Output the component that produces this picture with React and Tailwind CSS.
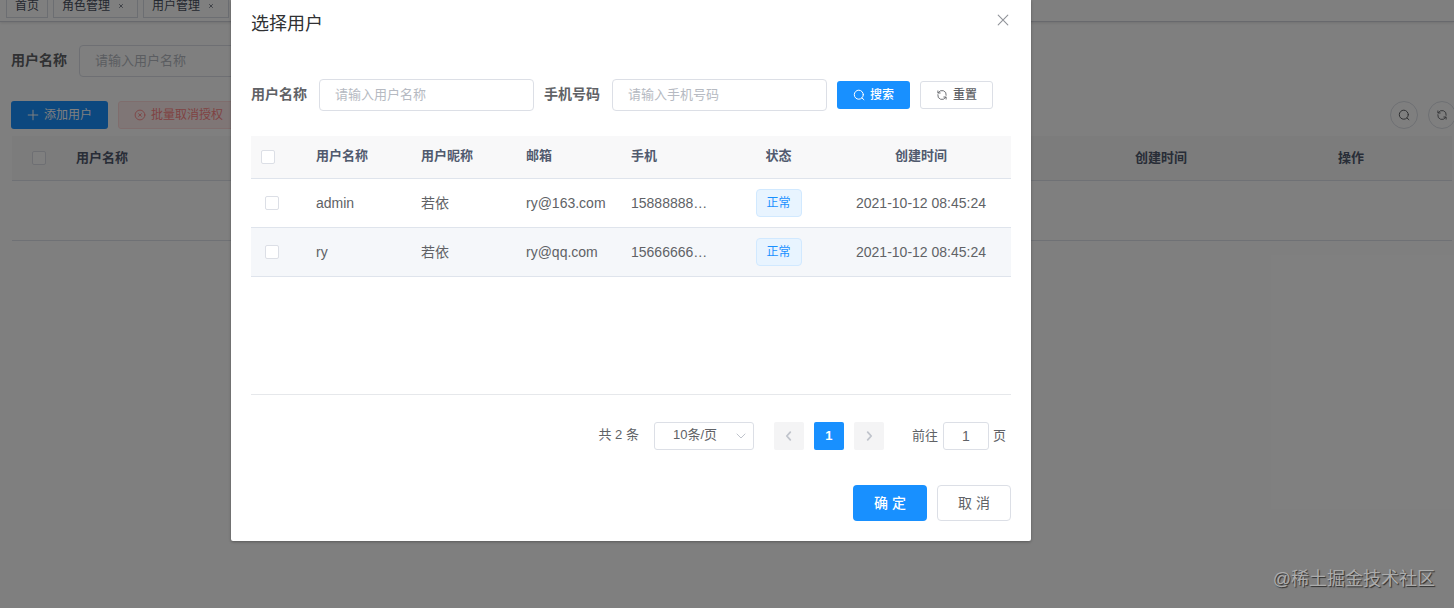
import React from "react";

const SearchIcon = ({ size = 12 }) => (
  <svg width={size} height={size} viewBox="0 0 12 12" fill="none" stroke="currentColor" strokeWidth="1" strokeLinecap="round">
    <circle cx="5.8" cy="5.7" r="4.5" />
    <path d="M9 9 L10.9 10.7" />
  </svg>
);

const RefreshIcon = ({ size = 12 }) => (
  <svg width={size} height={size} viewBox="0 0 12 12" fill="none" stroke="currentColor" strokeWidth="0.9" strokeLinecap="round" strokeLinejoin="round">
    <path d="M2.3 3.8 A4.2 4.2 0 0 1 10.2 6.3" />
    <path d="M9.7 8.2 A4.2 4.2 0 0 1 1.8 5.7" />
    <path d="M1.9 1.9 V4 H4.2" />
    <path d="M10.1 10.1 V8 H7.8" />
  </svg>
);

const CloseIcon = () => (
  <svg width="12" height="12" viewBox="0 0 12 12" fill="none" stroke="currentColor" strokeWidth="1.1" strokeLinecap="round">
    <path d="M1.2 1.2 L10.8 10.8 M10.8 1.2 L1.2 10.8" />
  </svg>
);

const PlusIcon = () => (
  <svg width="12" height="12" viewBox="0 0 12 12" fill="none" stroke="currentColor" strokeWidth="1">
    <path d="M6 0.8 V11.2 M0.8 6 H11.2" />
  </svg>
);

const CircleCloseIcon = () => (
  <svg width="12" height="12" viewBox="0 0 12 12" fill="none" stroke="currentColor" strokeWidth="0.9" strokeLinecap="round">
    <circle cx="6" cy="6" r="4.9" />
    <path d="M4.6 4.7 L7.4 7.3 M7.4 4.7 L4.6 7.3" />
  </svg>
);

const Chevron = ({ d, size = 12, width = 1.8 }) => (
  <svg width={size} height={size} viewBox="0 0 12 12" fill="none" stroke="currentColor" strokeWidth={width} strokeLinecap="round" strokeLinejoin="round">
    <path d={d} />
  </svg>
);

const Checkbox = () => <span className="block size-[14px] shrink-0 rounded-[2px] border border-[#dcdfe6] bg-white" />;

const Tab = ({ label, className, closable }) => (
  <div className={`flex h-[26px] shrink-0 items-center border border-[#d8dce5] pl-2 pt-px text-[12px] text-[#495060] ${className}`}>
    {label}
    {closable && (
      <svg className="ml-[7px] mt-px" width="8" height="8" viewBox="0 0 8 8" stroke="currentColor" strokeWidth="0.7">
        <path d="M2.2 2.2 L5.8 5.8 M5.8 2.2 L2.2 5.8" />
      </svg>
    )}
  </div>
);

const Field = ({ placeholder }) => (
  <div className="flex h-8 w-[215px] shrink-0 items-center rounded-[4px] border border-[#dcdfe6] bg-white pb-px pl-[15px] text-[13px] text-[#b6bac2]">
    {placeholder}
  </div>
);

const Background = () => (
  <div className="flex h-full w-full flex-col bg-white">
    <div className="flex h-[22px] shrink-0 items-end gap-[5px] border-b border-[#d0d3da] pb-[3px] pl-[6px] shadow-[0_1px_3px_0_rgba(0,0,0,0.12)]">
      <Tab label="首页" className="w-[42px]" />
      <Tab label="角色管理" className="w-[85px]" closable />
      <Tab label="用户管理" className="w-[86px]" closable />
    </div>
    <div className="mt-[23px] flex h-8 items-center pl-[11px]">
      <span className="mr-3 pb-px text-[14px] font-bold text-[#606266]">用户名称</span>
      <Field placeholder="请输入用户名称" />
    </div>
    <div className="mt-6 flex h-7 shrink-0 items-center pl-[11px] text-[12px]">
      <div className="flex h-7 w-[97px] items-center rounded-[3px] bg-[#1890ff] pl-4 text-white">
        <PlusIcon />
        <span className="ml-[5px] pb-px">添加用户</span>
      </div>
      <div className="ml-[10px] flex h-7 w-[122px] items-center rounded-[3px] border border-[#ffdbdb] bg-[#ffeded] pl-[15px] text-[#ff8686]">
        <CircleCloseIcon />
        <span className="ml-[5px] pb-px">批量取消授权</span>
      </div>
      <div className="ml-auto flex gap-[10px] text-[#606266]">
        <span className="flex size-7 items-center justify-center rounded-full border border-[#dcdfe6]"><SearchIcon /></span>
        <span className="-mr-[2px] flex size-7 items-center justify-center rounded-full border border-[#dcdfe6]"><RefreshIcon /></span>
      </div>
    </div>
    <div className="ml-[12px] mr-[2px] mt-[7px] flex h-[45px] shrink-0 items-center border-b border-[#dfe3ea] bg-[#f8f8f9] text-[13px] font-bold text-[#515a6e]">
      <div className="w-[64px] pl-5"><Checkbox /></div>
      <div className="w-[959px]">用户名称</div>
      <div className="w-[228px] pl-[100px] text-center whitespace-nowrap"><span className="block w-[52px]">创建时间</span></div>
      <div className="flex-1 pl-[75px]">操作</div>
    </div>
    <div className="ml-[12px] mr-[2px] h-[60px] border-b border-[#dfe3ea]" />
  </div>
);

const columns = "grid grid-cols-[55px_105px_105px_105px_105px_105px_180px] items-center";

const rows = [
  { name: "admin", nick: "若依", mail: "ry@163.com", phone: "15888888…", time: "2021-10-12 08:45:24", tint: "bg-white" },
  { name: "ry", nick: "若依", mail: "ry@qq.com", phone: "15666666…", time: "2021-10-12 08:45:24", tint: "bg-[#f5f7fa]" },
];

const UserTable = () => (
  <div className="mt-[25px] h-[259px] border-b border-[#e6e8eb]">
    <div className={`${columns} h-[43px] border-b border-[#dfe4ec] bg-[#f8f8f9] text-[13px] font-bold text-[#515a6e]`}>
      <div className="pl-[10px]"><Checkbox /></div>
      <div className="pb-[2px] pl-[10px]">用户名称</div>
      <div className="pb-[2px] pl-[10px]">用户昵称</div>
      <div className="pb-[2px] pl-[10px]">邮箱</div>
      <div className="pb-[2px] pl-[10px]">手机</div>
      <div className="pb-[2px] text-center">状态</div>
      <div className="pb-[2px] text-center">创建时间</div>
    </div>
    {rows.map((r) => (
      <div key={r.name} className={`${columns} h-[49px] border-b border-[#dfe4ec] text-[14px] text-[#606266] ${r.tint}`}>
        <div className="pl-[14px]"><Checkbox /></div>
        <div className="pl-[10px]">{r.name}</div>
        <div className="pl-[10px]">{r.nick}</div>
        <div className="pl-[10px]">{r.mail}</div>
        <div className="pl-[10px]">{r.phone}</div>
        <div className="flex justify-center">
          <span className="flex h-7 w-[46px] items-center justify-center rounded-[4px] border border-[#d1e9ff] bg-[#e8f4ff] pb-px text-[12px] text-[#1890ff]">正常</span>
        </div>
        <div className="text-center">{r.time}</div>
      </div>
    ))}
  </div>
);

const Dialog = () => (
  <div className="absolute left-[231px] top-0 flex h-[541px] w-[800px] flex-col rounded-b-[2px] bg-white pl-5 pr-5 shadow-[0_1px_3px_rgba(0,0,0,0.3)]">
    <div className="flex h-[46px] items-center justify-between text-[18px] text-[#303133]">
      <span className="pt-[2px]">选择用户</span>
      <span className="mb-[6px] mr-[2px] text-[#909399]"><CloseIcon /></span>
    </div>
    <div className="mt-[33px] flex h-8 items-center text-[14px] font-bold text-[#606266]">
      <span className="w-[68px] pb-[2px]">用户名称</span>
      <div className="font-normal"><Field placeholder="请输入用户名称" /></div>
      <span className="ml-[10px] w-[68px] pb-[2px]">手机号码</span>
      <div className="font-normal"><Field placeholder="请输入手机号码" /></div>
      <div className="ml-[10px] flex h-7 w-[73px] items-center rounded-[3px] bg-[#1890ff] pl-4 text-[12px] font-medium text-white">
        <SearchIcon /><span className="ml-[5px]">搜索</span>
      </div>
      <div className="ml-[10px] flex h-7 w-[73px] items-center rounded-[3px] border border-[#dcdfe6] pl-[15px] text-[12px] font-medium">
        <RefreshIcon /><span className="ml-[5px]">重置</span>
      </div>
    </div>
    <UserTable />
    <div className="mt-[27px] flex h-7 items-center justify-end pr-[5px] text-[13px] text-[#606266]">
      <span className="mr-[15px] pb-[2px]">共 2 条</span>
      <div className="flex h-7 w-[100px] items-center rounded-[3px] border border-[#dcdfe6] pl-[18px] text-[13px]">
        <span className="pb-[2px]">10条/页</span>
        <span className="ml-auto mr-[6px] text-[#c0c4cc]"><Chevron d="M2 4 L6 8 L10 4" width={1} /></span>
      </div>
      <span className="ml-5 flex h-7 w-[30px] items-center justify-center rounded-[2px] bg-[#f4f4f5] text-[#c0c4cc]"><Chevron d="M7.3 2.2 L3.8 6 L7.3 9.8" /></span>
      <span className="ml-[10px] flex h-7 w-[30px] items-center justify-center rounded-[2px] bg-[#1890ff] pb-px font-bold text-white">1</span>
      <span className="ml-[10px] flex h-7 w-[30px] items-center justify-center rounded-[2px] bg-[#f4f4f5] text-[#c0c4cc]"><Chevron d="M4.7 2.2 L8.2 6 L4.7 9.8" /></span>
      <span className="ml-7">前往</span>
      <span className="ml-[5px] flex h-7 w-[46px] items-center justify-center rounded-[3px] border border-[#dcdfe6] text-[14px]">1</span>
      <span className="ml-1">页</span>
    </div>
    <div className="mt-[35px] flex h-9 justify-end gap-[10px] text-[14px] font-medium">
      <span className="flex w-[74px] items-center justify-center rounded-[4px] bg-[#1890ff] text-white">确 定</span>
      <span className="flex w-[74px] items-center justify-center rounded-[4px] border border-[#dcdfe6] font-normal text-[#606266]">取 消</span>
    </div>
  </div>
);

export default function App() {
  return (
    <div className="relative h-[608px] w-[1454px] overflow-hidden font-['Liberation_Sans','Noto_Sans_CJK_SC',sans-serif] leading-normal">
      <Background />
      <div className="absolute inset-0 bg-black/50" />
      <Dialog />
      <div className="absolute bottom-[15px] right-[19px] text-[18px] text-[#acacac] [text-shadow:1px_1px_1px_rgba(0,0,0,0.65)]">@稀土掘金技术社区</div>
    </div>
  );
}
